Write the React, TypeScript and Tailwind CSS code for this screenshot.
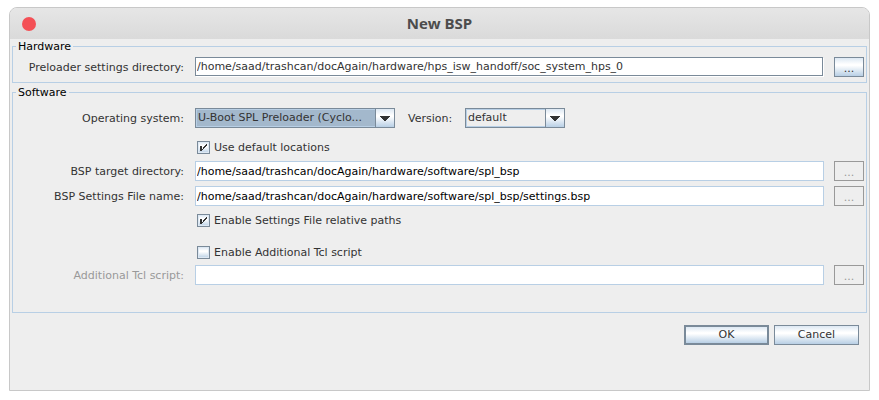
import { useState, type ReactNode } from "react";

const ROW = "grid grid-cols-[171px_minmax(0,1fr)_30px] items-center";
const GLOSS =
  "bg-[linear-gradient(to_bottom,#dde8f3_0%,#ffffff_35%,#ffffff_42%,#b8cfe5_100%)]";

function BrowseButton({ name, disabled }: { name: string; disabled?: boolean }) {
  return (
    <button
      type="button"
      aria-label={`Browse: ${name}`}
      disabled={disabled}
      className={`ml-2.5 -mr-2.5 h-5 w-[30px] border pt-1 text-center leading-[14px] ${
        disabled ? "border-[#999999] bg-[#eeeeee] text-[#999999]" : `border-[#7a8a99] ${GLOSS}`
      }`}
    >
      ...
    </button>
  );
}

function PathRow({
  id,
  label,
  value,
  editable,
  dimmed,
}: {
  id: string;
  label: string;
  value: string;
  editable?: boolean;
  dimmed?: boolean;
}) {
  const [text, setText] = useState(value);
  return (
    <div className={`${ROW} pr-3`}>
      <label htmlFor={id} className={`pt-0.5 text-right leading-[18px] ${dimmed ? "text-[#999999]" : ""}`}>
        {label}
      </label>
      <div className="ml-[11px] flex h-5">
        <input
          id={id}
          type="text"
          value={text}
          readOnly={!editable}
          onChange={(e) => setText(e.target.value)}
          className={`min-w-0 flex-1 border bg-white pt-0.5 pl-px outline-none ${
            editable
              ? "mr-px mb-px border-[#7a8a99] text-[#333333] shadow-[1px_1px_0_#ffffff]"
              : "border-[#b8cfe5] text-black"
          }`}
        />
      </div>
      <BrowseButton name={label} disabled={!editable} />
    </div>
  );
}

function Combo({
  id,
  label,
  options,
  width,
  fill,
}: {
  id?: string;
  label: string;
  options: string[];
  width: string;
  fill: string;
}) {
  return (
    <div className={`relative h-5 ${width}`}>
      <select
        id={id}
        aria-label={label}
        className={`block h-5 w-full appearance-none border border-[#7a8a99] pr-5 pl-0.5 shadow-[inset_0_0_0_1px_#b8cfe5] outline-none ${fill}`}
      >
        {options.map((option) => (
          <option key={option}>{option}</option>
        ))}
      </select>
      <span
        className={`pointer-events-none absolute inset-y-0 right-0 flex w-5 items-center justify-center border border-[#7a8a99] ${GLOSS}`}
      >
        <svg width="10" height="5" viewBox="0 0 10 5" aria-hidden="true">
          <path d="M0 0h10v1H9v1H8v1H7v1H6v1H4V4H3V3H2V2H1V1H0z" fill="#333333" />
        </svg>
      </span>
    </div>
  );
}

function CheckRow({ label, initial }: { label: string; initial: boolean }) {
  const [checked, setChecked] = useState(initial);
  return (
    <label className="ml-[184px] flex h-[13px] w-fit items-center gap-1 leading-[13px]">
      <span className="relative size-[13px]">
        <input
          type="checkbox"
          checked={checked}
          onChange={(e) => setChecked(e.target.checked)}
          className={`block size-[13px] appearance-none border border-[#7a8a99] shadow-[inset_0_0_0_1px_#dde8f3] ${GLOSS}`}
        />
        {checked && (
          <svg
            className="pointer-events-none absolute inset-0"
            width="13"
            height="13"
            viewBox="0 0 13 13"
            aria-hidden="true"
          >
            <path
              d="M3 5h2v3h1V6h1V5h1V4h1V3h1v2H9v1H8v1H7v1H6v1H5v1H3z"
              fill="#333333"
            />
          </svg>
        )}
      </span>
      {label}
    </label>
  );
}

function Group({ title, className, children }: { title: string; className: string; children: ReactNode }) {
  return (
    <fieldset className={`min-w-0 border border-[#b8cfe5] ${className}`}>
      <legend className="ml-[3px] h-[14px] px-0.5 leading-4 text-black">{title}</legend>
      {children}
    </fieldset>
  );
}

export default function App() {
  return (
    <div className="min-h-[400px] bg-white px-[9px] pt-[7px] pb-[9px] font-['DejaVu_Sans',sans-serif] text-[11px] text-[#333333]">
      <form
        onSubmit={(e) => e.preventDefault()}
        className="overflow-hidden rounded-t-lg border border-[#c8c8c8] bg-[#eeeeee] pb-[45px]"
      >
        <header className="grid h-[31px] grid-cols-[40px_1fr_40px] items-center bg-linear-to-b from-[#e6e6e6] to-[#dadada]">
          <button type="button" aria-label="Close" className="ml-3 size-3.5 rounded-full bg-[#f45056]" />
          <h1 className="pb-0.5 text-center font-['Open_Sans','Noto_Sans',sans-serif] text-[15px] leading-5 font-bold text-[#4c4c4c]">
            New BSP
          </h1>
        </header>

        <div className="px-0.5">
          <Group title="Hardware" className="pt-1 pb-[5px]">
            <PathRow
              id="preloader"
              label="Preloader settings directory:"
              value="/home/saad/trashcan/docAgain/hardware/hps_isw_handoff/soc_system_hps_0"
              editable
            />
          </Group>

          <Group title="Software" className="mt-0.5 pt-[9px] pb-[27px]">
            <div className="flex items-center">
              <label htmlFor="os" className="w-[171px] pt-0.5 text-right leading-[18px]">
                Operating system:
              </label>
              <div className="ml-[11px] flex items-center">
                <Combo
                  id="os"
                  label="Operating system"
                  options={["U-Boot SPL Preloader (Cyclo..."]}
                  width="w-[200px]"
                  fill="bg-[#a3b8cc]"
                />
                <label htmlFor="version" className="ml-[13px] w-[57px] pt-0.5 leading-[18px]">
                  Version:
                </label>
                <Combo id="version" label="Version" options={["default"]} width="w-[100px]" fill="bg-[#eeeeee]" />
              </div>
            </div>
            <div className="mt-[13px]">
              <CheckRow label="Use default locations" initial />
            </div>
            <div className="mt-[7px] flex flex-col gap-[5px]">
              <PathRow
                id="target"
                label="BSP target directory:"
                value="/home/saad/trashcan/docAgain/hardware/software/spl_bsp"
              />
              <PathRow
                id="settings"
                label="BSP Settings File name:"
                value="/home/saad/trashcan/docAgain/hardware/software/spl_bsp/settings.bsp"
              />
            </div>
            <div className="mt-2 flex flex-col gap-[19px]">
              <CheckRow label="Enable Settings File relative paths" initial />
              <CheckRow label="Enable Additional Tcl script" initial={false} />
            </div>
            <div className="mt-1.5">
              <PathRow id="tcl" label="Additional Tcl script:" value="" dimmed />
            </div>
          </Group>
        </div>

        <div className="mt-3 flex justify-end gap-[5px] pr-2.5">
          <button type="submit" className={`h-5 w-[85px] border-2 border-[#7a8a99] leading-4 ${GLOSS}`}>
            OK
          </button>
          <button type="button" className={`h-5 w-[85px] border border-[#7a8a99] leading-4 ${GLOSS}`}>
            Cancel
          </button>
        </div>
      </form>
    </div>
  );
}
